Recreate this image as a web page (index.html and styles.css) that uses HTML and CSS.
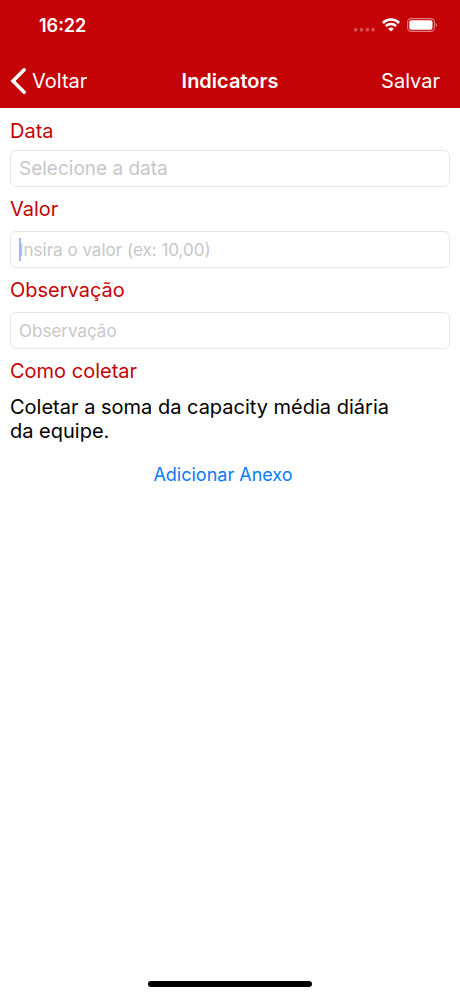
FILE: index.html
```
<!DOCTYPE html>
<html lang="pt-BR">
  <head>
    <meta charset="UTF-8" />
    <meta name="viewport" content="width=device-width, initial-scale=1.0" />
    <title>Indicators</title>
    <link rel="stylesheet" href="styles.css">
  </head>
  <body>
    <header class="header">
      <div class="status-bar">
        <span class="time">16:22</span>
        <div class="status-icons">
          <svg class="signal" width="21" height="4" viewBox="0 0 21 4" aria-hidden="true">
            <rect x="0" y="0" width="3.4" height="3.4" rx="1" />
            <rect x="5.8" y="0" width="3.4" height="3.4" rx="1" />
            <rect x="11.6" y="0" width="3.4" height="3.4" rx="1" />
            <rect x="17.4" y="0" width="3.4" height="3.4" rx="1" />
          </svg>
          <svg class="wifi" width="18" height="14" viewBox="0 0 18 14" aria-hidden="true">
            <path d="M0.9 5 A11.4 11.4 0 0 1 17.1 5" />
            <path d="M3.9 8.2 A7.2 7.2 0 0 1 14.1 8.2" />
            <path class="dot" d="M9 13.6 L6.2 10.8 A4 4 0 0 1 11.8 10.8 Z" />
          </svg>
          <svg width="31" height="14" viewBox="0 0 31 14" aria-hidden="true">
            <rect x="0.6" y="0.6" width="26.8" height="12.8" rx="3.6" fill="none" stroke="#fff" stroke-opacity="0.5" stroke-width="1.1" />
            <rect x="2.3" y="2.3" width="23.2" height="9.4" rx="2" fill="#fff" />
            <path d="M28.7 5 a2.2 2.2 0 0 1 0 4 Z" fill="#fff" fill-opacity="0.5" />
          </svg>
        </div>
      </div>
      <nav class="nav-bar">
        <button type="button" class="nav-btn back">
          <svg width="17" height="28" viewBox="0 0 17 28" aria-hidden="true">
            <path d="M14.2 2.8 L3 14 L14.2 25.2" />
          </svg>
          Voltar
        </button>
        <h1>Indicators</h1>
        <button type="submit" form="indicatorForm" class="nav-btn save">Salvar</button>
      </nav>
    </header>

    <main>
      <form id="indicatorForm" class="form">
        <div class="field field-date">
          <label for="dataInput">Data</label>
          <input type="text" id="dataInput" name="data" placeholder="Selecione a data" />
        </div>
        <div class="field">
          <label for="valorInput">Valor</label>
          <div class="input-wrap">
            <input type="text" id="valorInput" name="valor" inputmode="decimal" placeholder="Insira o valor (ex: 10,00)" />
            <span class="caret"></span>
          </div>
        </div>
        <div class="field">
          <label for="obsInput">Observação</label>
          <input type="text" id="obsInput" name="observacao" placeholder="Observação" />
        </div>
        <section class="howto">
          <h2>Como coletar</h2>
          <p>Coletar a soma da capacity média diária da equipe.</p>
        </section>
        <button type="button" class="attach-btn">Adicionar Anexo</button>
      </form>
    </main>

    <div class="home-indicator"></div>
  </body>
</html>
```
FILE: styles.css
```
* {
  margin: 0;
  padding: 0;
  box-sizing: border-box;
  font-family: Inter, "Liberation Sans", sans-serif;
}

body {
  display: flex;
  flex-direction: column;
  min-height: 100vh;
  background: #fff;
  color: #000;
}

button {
  background: none;
  border: none;
  cursor: pointer;
}

.header {
  background: #c40306;
  color: #fff;
}

.status-bar {
  display: flex;
  justify-content: space-between;
  align-items: center;
  height: 54px;
  padding: 0 22px 4px 39px;
}

.time {
  font-size: 18px;
  font-weight: 600;
}

.status-icons {
  display: flex;
  align-items: center;
  gap: 7px;
}

.signal {
  align-self: flex-end;
  fill: #fff;
  fill-opacity: 0.3;
}

.wifi path {
  fill: none;
  stroke: #fff;
  stroke-width: 2.5;
}

.wifi .dot {
  fill: #fff;
  stroke: none;
}

.nav-bar {
  display: grid;
  grid-template-columns: 1fr auto 1fr;
  align-items: center;
  height: 54px;
  padding: 0 10px;
}

.nav-bar h1 {
  font-size: 20px;
  font-weight: 600;
}

.nav-btn {
  display: flex;
  align-items: center;
  gap: 5px;
  color: #fff;
  font-size: 20px;
}

.back path {
  fill: none;
  stroke: #fff;
  stroke-width: 3.6;
  stroke-linecap: round;
}

.save {
  justify-self: end;
  padding: 0 10px;
}

main {
  flex: 1;
  padding: 11px 10px;
}

.form {
  display: flex;
  flex-direction: column;
  gap: 10px;
}

.field {
  display: flex;
  flex-direction: column;
  gap: 10px;
}

.field-date {
  gap: 7px;
}

.field label,
.howto h2 {
  color: #c40306;
  font-size: 20px;
  font-weight: 400;
  line-height: 24px;
}

.field input {
  width: 100%;
  height: 37px;
  padding: 0 8px;
  border: 1px solid #e6e6e8;
  border-radius: 6px;
  background: #fff;
  font-size: 17px;
  outline: none;
}

.field-date input {
  font-size: 19px;
}

.field input::placeholder {
  color: #c7c7cb;
}

.input-wrap {
  display: flex;
  position: relative;
}

.caret {
  position: absolute;
  top: 7px;
  left: 9px;
  width: 2px;
  height: 23px;
  background: #a3b8ee;
}

.howto {
  display: flex;
  flex-direction: column;
  gap: 12px;
}

.howto p {
  max-width: 400px;
  font-size: 20px;
  line-height: 24px;
}

.attach-btn {
  align-self: center;
  margin: 10px 14px 0 0;
  color: #0a7cf5;
  font-size: 18px;
  line-height: 24px;
}

.home-indicator {
  align-self: center;
  width: 164px;
  height: 6px;
  margin-bottom: 9px;
  border-radius: 3px;
  background: #000;
}
```
